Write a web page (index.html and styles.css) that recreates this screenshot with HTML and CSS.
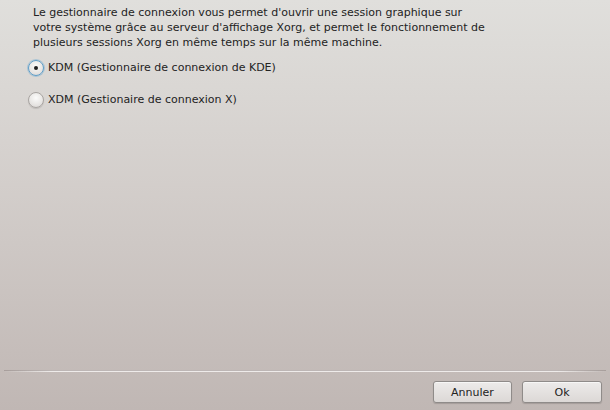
FILE: index.html
```html
<!DOCTYPE html>
<html lang="fr">
<head>
<meta charset="utf-8">
<link rel="stylesheet" href="styles.css">
</head>
<body>
<div class="dialog">
  <div class="content">
    <p class="intro">Le gestionnaire de connexion vous permet d'ouvrir une session graphique sur<br>votre système grâce au serveur d'affichage Xorg, et permet le fonctionnement de<br>plusieurs sessions Xorg en même temps sur la même machine.</p>
    <div class="options">
      <label class="option"><span class="radio checked"><span class="dot"></span></span><span>KDM (Gestionnaire de connexion de KDE)</span></label>
      <label class="option"><span class="radio"></span><span>XDM (Gestionaire de connexion X)</span></label>
    </div>
  </div>
  <div class="separator"></div>
  <div class="buttons">
    <button class="btn">Annuler</button>
    <button class="btn">Ok</button>
  </div>
</div>
</body>
</html>
```
FILE: styles.css
```css
html, body {
  margin: 0;
  padding: 0;
  width: 610px;
  height: 410px;
  overflow: hidden;
}
body {
  background: linear-gradient(to bottom, #e0dfdc 0%, #d3cecb 45%, #c0b7b4 100%);
  font-family: "DejaVu Sans", sans-serif;
  font-size: 11px;
  color: #232323;
}
.dialog {
  height: 410px;
  display: flex;
  flex-direction: column;
}
.content {
  flex: 1;
  padding: 5px 0 0 33px;
}
.intro {
  margin: 0;
  line-height: 15px;
}
.options {
  margin: 9px 0 0 -5px;
  display: flex;
  flex-direction: column;
  gap: 15px;
}
.option {
  display: flex;
  align-items: center;
  gap: 4px;
  height: 17px;
}
.radio {
  width: 14px;
  height: 14px;
  border-radius: 50%;
  border: 1px solid #a9a5a2;
  background: radial-gradient(circle at 50% 35%, #fbfbfa 0%, #e7e5e3 60%, #d6d3d0 100%);
  box-shadow: 0 1px 1px rgba(0,0,0,0.12);
  display: flex;
  align-items: center;
  justify-content: center;
  flex: none;
}
.radio.checked {
  border-color: #5e9ec9;
  box-shadow: 0 0 0 1px rgba(110,170,210,0.45);
}
.dot {
  width: 4px;
  height: 4px;
  border-radius: 50%;
  background: #1f1f1f;
}
.separator {
  margin: 0 4px;
  background: linear-gradient(to right, rgba(255,255,255,0), #eeebea 8%, #eeebea 92%, rgba(255,255,255,0));
  border-top: 1px solid rgba(140,130,128,0.5);
  box-sizing: border-box;
  height: 2px;
}
.buttons {
  display: flex;
  justify-content: flex-end;
  gap: 10px;
  padding: 9px 8px 7px 0;
}
.btn {
  width: 80px;
  height: 22px;
  font-family: "DejaVu Sans", sans-serif;
  font-size: 11px;
  color: #232323;
  border: 1px solid #8f8b89;
  border-radius: 3px;
  background: linear-gradient(to bottom, #edebea 0%, #dcd8d6 100%);
  box-shadow: 0 1px 1px rgba(0,0,0,0.15), inset 0 1px 0 rgba(255,255,255,0.6);
  padding: 0;
}
.btn:first-child {
  width: 79px;
}
```
